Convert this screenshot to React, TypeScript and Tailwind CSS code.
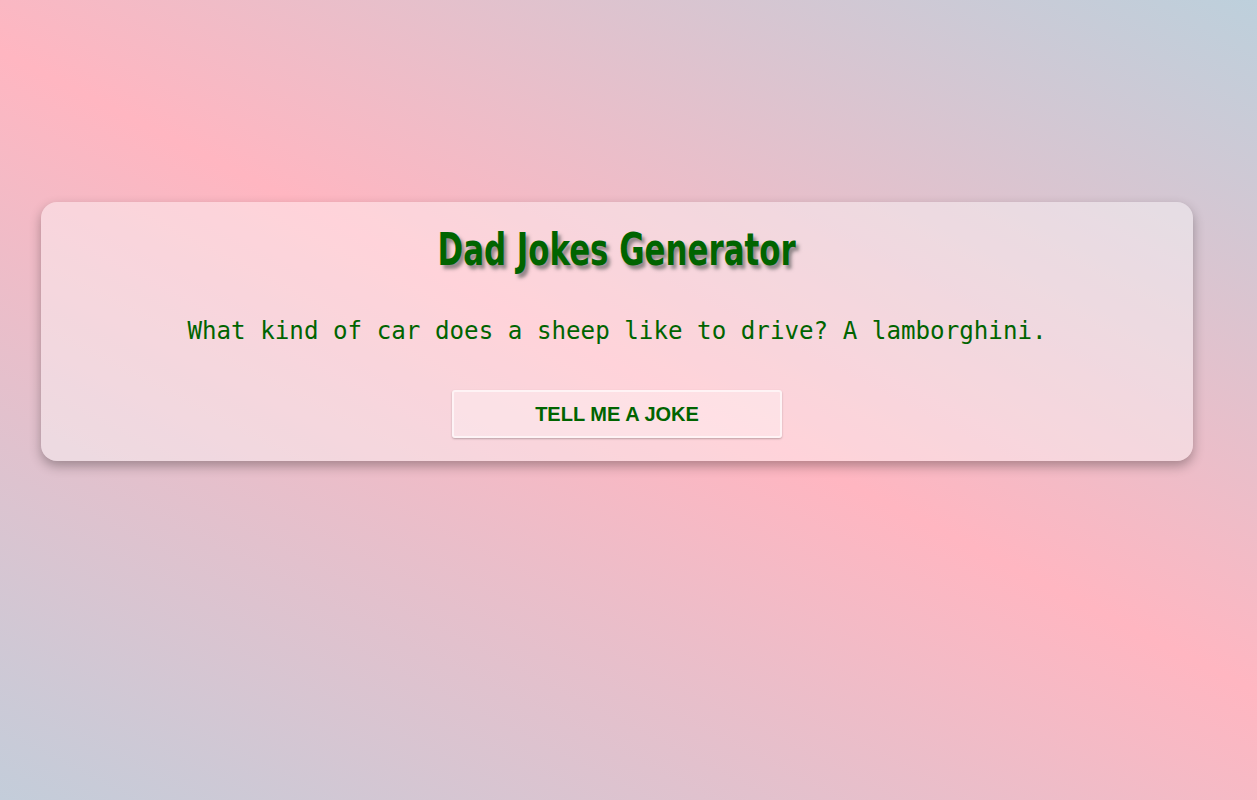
import React from "react";

export default function App() {
  return (
    <div className="min-h-[800px] w-full bg-[linear-gradient(27deg,#c3cdda_0%,#ffb6c1_52%,#bdd0dc_100%)] pt-[202px]">
      <div className="ml-[41px] flex h-[259px] w-[1152px] flex-col items-center rounded-[16px] bg-white/40 shadow-[0_5px_12px_rgba(0,0,0,0.3)]">
        <h1 className="mt-[24px] scale-x-[0.78] font-['DejaVu_Sans_Condensed',sans-serif] text-[44px] font-bold leading-[48px] text-[#006400] [text-shadow:4px_4px_4px_rgba(90,90,90,0.65)]">
          Dad Jokes Generator
        </h1>
        <p className="mt-[42px] font-['DejaVu_Sans_Mono',monospace] text-[24.2px] leading-[30px] text-[#006400]">
          What kind of car does a sheep like to drive? A lamborghini.
        </p>
        <button className="mt-[44px] h-[48px] w-[330px] rounded-[3px] border-2 border-white/60 bg-white/30 font-['Liberation_Sans',Arial,sans-serif] text-[20px] font-bold uppercase text-[#006400] shadow-[0_1px_2px_rgba(0,0,0,0.25)]">
          Tell me a joke
        </button>
      </div>
    </div>
  );
}
